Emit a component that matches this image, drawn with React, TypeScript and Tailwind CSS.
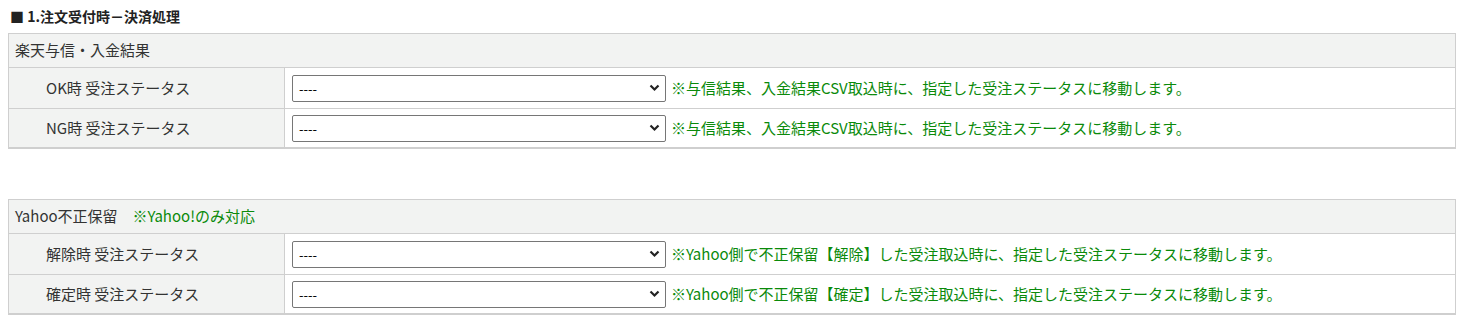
const font = { fontFamily: '"Noto Sans CJK JP", "Noto Sans", sans-serif' };

function StatusSelect() {
  return (
    <div className="relative w-[374px] h-[27px] shrink-0">
      <select className="appearance-none w-full h-full rounded-[2px] border border-[#767676] bg-white pl-[6px] text-[13px] text-black outline-none">
        <option>----</option>
      </select>
      <svg className="pointer-events-none absolute right-[6px] top-[9px]" width="11" height="8" viewBox="0 0 11 8">
        <path d="M1.5 1.5 L5.5 5.5 L9.5 1.5" fill="none" stroke="#222" strokeWidth="2.2" />
      </svg>
    </div>
  );
}

function Row({ label, note, last }: { label: string; note: string; last?: boolean }) {
  return (
    <div className={`flex h-[41px] border-t border-[#cfcfcf] ${last ? "border-b-2 border-b-[#cfcfcf]" : ""}`}>
      <div className="w-[276px] shrink-0 bg-[#f2f3f2] border-r border-[#cfcfcf] flex items-center pl-[37px] text-[15px] text-[#333]">
        {label}
      </div>
      <div className="flex-1 bg-white flex items-center pl-[7px] gap-[5px]">
        <StatusSelect />
        <span className="text-[15px] text-[#0a8a0a]">{note}</span>
      </div>
    </div>
  );
}

function Section({ title, tag, rows }: { title: string; tag?: string; rows: { label: string; note: string }[] }) {
  return (
    <div className="border-x border-t border-[#cfcfcf]">
      <div className="h-[33px] bg-[#f2f3f2] flex items-center pl-[6px] text-[15px] text-[#333]">
        {title}
        {tag && <span className="ml-[15px] text-[#0a8a0a]">{tag}</span>}
      </div>
      {rows.map((r, i) => (
        <Row key={r.label} label={r.label} note={r.note} last={i === rows.length - 1} />
      ))}
    </div>
  );
}

export default function App() {
  const csvNote = "※与信結果、入金結果CSV取込時に、指定した受注ステータスに移動します。";
  return (
    <div className="w-[1465px] h-[324px] bg-white px-2 pt-[6px] overflow-hidden" style={font}>
      <h3 className="pl-[2px] h-[21px] text-[14px] font-bold text-[#222] leading-[21px]">■ 1.注文受付時－決済処理</h3>
      <div className="mt-[6px] w-[1448px]">
        <Section
          title="楽天与信・入金結果"
          rows={[
            { label: "OK時 受注ステータス", note: csvNote },
            { label: "NG時 受注ステータス", note: csvNote },
          ]}
        />
      </div>
      <div className="mt-[50px] w-[1448px]">
        <Section
          title="Yahoo不正保留"
          tag="※Yahoo!のみ対応"
          rows={[
            { label: "解除時 受注ステータス", note: "※Yahoo側で不正保留【解除】した受注取込時に、指定した受注ステータスに移動します。" },
            { label: "確定時 受注ステータス", note: "※Yahoo側で不正保留【確定】した受注取込時に、指定した受注ステータスに移動します。" },
          ]}
        />
      </div>
    </div>
  );
}
